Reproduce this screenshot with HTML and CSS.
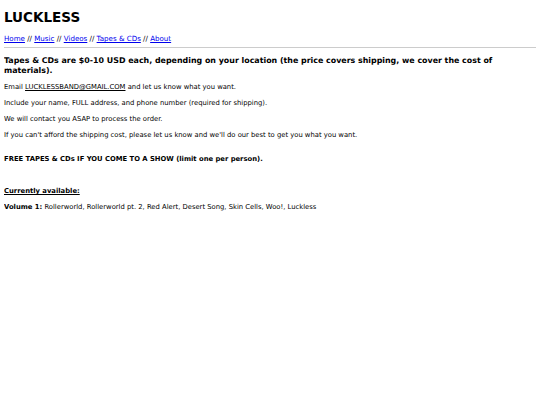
FILE: index.html
```html
<!DOCTYPE html>
<html lang="en">
<head>
  <meta charset="UTF-8" />
  <title>LUCKLESS - Tapes & CDs</title>
  <link rel="stylesheet" href="styles.css">
</head>
<body>

  <h1>LUCKLESS</h1>

  <div class="nav">
    <a href="#">Home</a> // <a href="#">Music</a> // <a href="#">Videos</a> // <a href="#">Tapes &amp; CDs</a> // <a href="#">About</a>
  </div>
  <hr>

  <h3>Tapes &amp; CDs are $0-10 USD each, depending on your location (the price covers shipping, we cover the cost of materials).</h3>

  <p>Email <a href="#" class="mail">LUCKLESSBAND@GMAIL.COM</a> and let us know what you want.</p>
  <p>Include your name, FULL address, and phone number (required for shipping).</p>
  <p>We will contact you ASAP to process the order.</p>
  <p>If you can't afford the shipping cost, please let us know and we'll do our best to get you what you want.</p>

  <p class="free"><b>FREE TAPES &amp; CDs IF YOU COME TO A SHOW (limit one per person).</b></p>

  <p class="avail"><b><u>Currently available:</u></b></p>
  <p><b>Volume 1:</b> Rollerworld, Rollerworld pt. 2, Red Alert, Desert Song, Skin Cells, Woo!, Luckless</p>

</body>
</html>
```

FILE: styles.css
```css
body {
  font-family: Verdana, "DejaVu Sans", sans-serif;
  font-size: 6.8px;
  margin: 4px;
  color: #000;
  background: #fff;
}
h1 {
  font-size: 13.5px;
  line-height: 16px;
  margin: 5px 0 9px;
}
.nav {
  font-size: 7.1px;
  line-height: 10px;
}
.nav a {
  color: #00e;
}
hr {
  border: none;
  border-top: 1px solid #ccc;
  margin: 3px 0 8px;
}
h3 {
  font-size: 7.9px;
  line-height: 10px;
  margin: 0 0 7px;
}
p {
  margin: 0 0 7px;
  line-height: 9px;
}
.mail {
  color: #000;
}
.free {
  margin-top: 15px;
}
.avail {
  margin-top: 23px;
}
```
